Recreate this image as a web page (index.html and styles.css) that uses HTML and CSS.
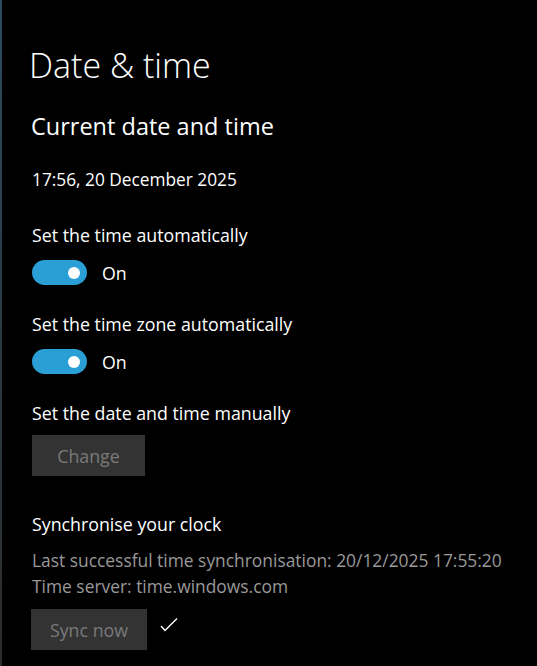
FILE: index.html
```html
<!DOCTYPE html>
<html lang="en">
<head>
    <meta charset="UTF-8">
    <meta name="viewport" content="width=device-width,initial-scale=1.0">
    <title>Date &amp; time</title>
    <link rel="stylesheet" href="styles.css">
</head>
<body>
    <main class="page">
        <h1 class="page-title">Date &amp; time</h1>
        <h2 class="section-title">Current date and time</h2>
        <div class="now">17:56, 20 December 2025</div>

        <div class="setting">
            <div class="label">Set the time automatically</div>
            <div class="toggle-row">
                <span class="toggle"><span class="knob"></span></span>
                <span class="toggle-text">On</span>
            </div>
        </div>

        <div class="setting">
            <div class="label">Set the time zone automatically</div>
            <div class="toggle-row">
                <span class="toggle"><span class="knob"></span></span>
                <span class="toggle-text">On</span>
            </div>
        </div>

        <div class="setting">
            <div class="label">Set the date and time manually</div>
            <button class="btn btn-change" disabled>Change</button>
        </div>

        <div class="sync">
            <div class="label">Synchronise your clock</div>
            <div class="sync-info">
                <div>Last successful time synchronisation: 20/12/2025 17:55:20</div>
                <div>Time server: time.windows.com</div>
            </div>
            <div class="sync-row">
                <button class="btn btn-sync" disabled>Sync now</button>
                <svg class="check" width="20" height="16" viewBox="0 0 20 16">
                    <polyline points="2,10 6,14.5 18,2.5" fill="none" stroke="#fff" stroke-width="1.4"/>
                </svg>
            </div>
        </div>
    </main>
</body>
</html>
```

FILE: styles.css
```css
:root {
    --accent: #2a9fd6;
    --text: #ffffff;
    --muted: #999999;
    --btn-bg: #333333;
    --btn-text: #7a7a7a;
}
html, body {
    margin: 0;
    padding: 0;
    background: #000;
    color: var(--text);
    font-family: 'Open Sans', 'Noto Sans', sans-serif;
}
.page {
    min-height: 666px;
    box-sizing: border-box;
    padding: 45px 0 0 30px;
    border-left: 2px solid;
    border-image: linear-gradient(180deg, #2b4c60, #2a3a44 50%, #2c2c2c) 1;
}
.page-title {
    margin: 0 0 0 -3px;
    font-size: 34px;
    font-weight: 300;
    line-height: 40px;
}
.section-title {
    margin: 25px 0 0 -1px;
    font-size: 23.5px;
    font-weight: 400;
    line-height: 32px;
}
.now {
    margin-top: 26px;
    font-size: 17.3px;
    line-height: 24px;
}
.label {
    font-size: 17.8px;
    line-height: 24px;
}
.setting {
    margin-top: 31px;
}
.setting + .setting {
    margin-top: 27px;
}
.toggle-row {
    display: flex;
    align-items: center;
    margin-top: 13px;
}
.toggle {
    display: flex;
    align-items: center;
    justify-content: flex-end;
    box-sizing: border-box;
    width: 55px;
    height: 25px;
    padding-right: 7px;
    border-radius: 13px;
    background: var(--accent);
}
.knob {
    width: 12px;
    height: 12px;
    border-radius: 50%;
    background: #fff;
}
.toggle-text {
    margin-left: 15px;
    font-size: 17.8px;
}
.btn {
    display: block;
    height: 41px;
    border: none;
    background: var(--btn-bg);
    color: var(--btn-text);
    font-family: inherit;
    font-size: 17.8px;
    padding: 0;
}
.btn-change {
    width: 113px;
    margin-top: 10px;
}
.sync {
    margin-top: 36px;
}
.sync-info {
    margin-top: 11px;
    color: var(--muted);
    font-size: 17.4px;
    line-height: 26px;
}
.sync-row {
    display: flex;
    align-items: flex-start;
    margin-top: 10px;
}
.btn-sync {
    width: 116px;
    margin-left: -1px;
}
.check {
    margin: 7px 0 0 12px;
}
```
